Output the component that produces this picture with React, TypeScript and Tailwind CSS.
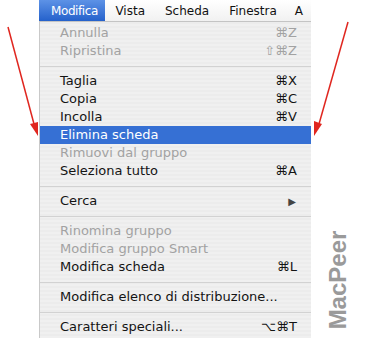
import React from 'react';

type Item =
  | { kind: 'sep' }
  | { kind: 'item'; label: string; shortcut?: string; disabled?: boolean; active?: boolean; submenu?: boolean };

const items: Item[] = [
  { kind: 'item', label: 'Annulla', shortcut: '⌘Z', disabled: true },
  { kind: 'item', label: 'Ripristina', shortcut: '⇧⌘Z', disabled: true },
  { kind: 'sep' },
  { kind: 'item', label: 'Taglia', shortcut: '⌘X' },
  { kind: 'item', label: 'Copia', shortcut: '⌘C' },
  { kind: 'item', label: 'Incolla', shortcut: '⌘V' },
  { kind: 'item', label: 'Elimina scheda', active: true },
  { kind: 'item', label: 'Rimuovi dal gruppo', disabled: true },
  { kind: 'item', label: 'Seleziona tutto', shortcut: '⌘A' },
  { kind: 'sep' },
  { kind: 'item', label: 'Cerca', submenu: true },
  { kind: 'sep' },
  { kind: 'item', label: 'Rinomina gruppo', disabled: true },
  { kind: 'item', label: 'Modifica gruppo Smart', disabled: true },
  { kind: 'item', label: 'Modifica scheda', shortcut: '⌘L' },
  { kind: 'sep' },
  { kind: 'item', label: 'Modifica elenco di distribuzione...' },
  { kind: 'sep' },
  { kind: 'item', label: 'Caratteri speciali...', shortcut: '⌥⌘T' },
];

const MenuRow: React.FC<{ item: Item }> = ({ item }) => {
  if (item.kind === 'sep') {
    return (
      <div className="h-[12px] flex items-center">
        <div className="w-full h-px bg-[#d2d2d2]" />
      </div>
    );
  }
  const color = item.active ? 'text-white bg-[#3670d4]' : item.disabled ? 'text-[#a2a2a2]' : 'text-[#141414]';
  return (
    <div className={`h-[18px] flex items-center pl-[20px] pr-[14px] ${color}`}>
      <span className="flex-1 whitespace-nowrap">{item.label}</span>
      {item.shortcut && <span className="whitespace-nowrap">{item.shortcut}</span>}
      {item.submenu && <span className="text-[10px] text-[#444] pr-[1px]">▶</span>}
    </div>
  );
};

export default function App() {
  return (
    <div className="relative w-[372px] h-[338px] bg-white overflow-hidden font-['DejaVu_Sans',sans-serif]">
      <div className="ml-[39px] w-[272px]">
        {/* menu bar */}
        <div className="h-[22px] flex items-stretch text-[12px] text-[#111] bg-linear-to-b from-white to-[#f1f1f1] border-b border-[#c4c4c4] overflow-hidden">
          <div className="w-[72px] pl-[12px] flex items-center text-white tracking-[-0.4px] bg-linear-to-b from-[#5d92e6] to-[#2461cb]">
            Modifica
          </div>
          <div className="px-[10px] flex items-center">Vista</div>
          <div className="px-[10px] flex items-center">Scheda</div>
          <div className="px-[10px] flex items-center">Finestra</div>
          <div className="px-[8px] flex items-center">A</div>
        </div>
        {/* dropdown */}
        <div className="pt-[2px] pb-[2px] text-[13px] border-l border-[#c9c9c9] bg-[repeating-linear-gradient(0deg,#f0f0f0_0px,#f0f0f0_2px,#ececec_2px,#ececec_4px)]">
          {items.map((it, i) => (
            <MenuRow key={i} item={it} />
          ))}
        </div>
      </div>

      {/* red arrows */}
      <svg className="absolute inset-0 pointer-events-none" width="372" height="338" viewBox="0 0 372 338">
        <line x1="8" y1="27" x2="34" y2="124" stroke="#e0261f" strokeWidth="1.5" />
        <polygon points="38,136 30,124 38,122" fill="#e0261f" />
        <line x1="348" y1="22" x2="319" y2="124" stroke="#e0261f" strokeWidth="1.5" />
        <polygon points="314,136 314,121 322,124" fill="#e0261f" />
      </svg>

      {/* watermark */}
      <div className="absolute left-[338px] top-[280px] -translate-x-1/2 -translate-y-1/2 -rotate-90 whitespace-nowrap font-['Liberation_Sans',sans-serif] font-bold text-[24px] leading-none text-[#9a9a9a]">
        MacPeer
      </div>
    </div>
  );
}
